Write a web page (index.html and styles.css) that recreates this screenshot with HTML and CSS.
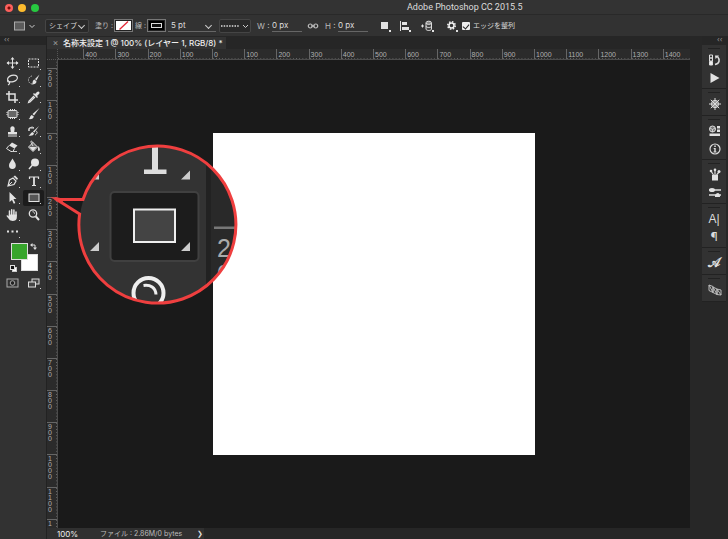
FILE: index.html
```html
<!DOCTYPE html>
<html lang="ja">
<head>
<meta charset="utf-8">
<title>Adobe Photoshop CC 2015.5</title>
<link rel="stylesheet" href="styles.css">
</head>
<body>
<div class="app">
  <header class="titlebar">
    <div class="lights">
      <button class="light close" aria-label="閉じる"></button>
      <button class="light minimize" aria-label="しまう"></button>
      <button class="light maximize" aria-label="拡大"></button>
    </div>
    <h1>Adobe Photoshop CC 2015.5</h1>
  </header>

  <form class="options">
    <button type="button" class="icon preset" aria-label="長方形ツール"><svg width="24" height="12" viewBox="0 0 24 12"><rect x="1.5" y="2" width="10" height="8" fill="#5c5c5c" stroke="#aaa"/><path d="M16.5 5l2.5 2.5L21.500 5" fill="none" stroke="#ccc"/></svg></button>
    <span class="select mode"><select aria-label="モード"><option>シェイプ</option></select></span>
    <span class="label">塗り :</span>
    <button type="button" class="paint" aria-label="塗り"><svg width="15" height="9" viewBox="0 0 15 9"><rect width="15" height="9" fill="#fff"/><path d="M3.500 8.500L12 .5" stroke="#e32636" stroke-width="1.300"/></svg></button>
    <span class="label">線 :</span>
    <button type="button" class="paint" aria-label="線"><svg width="15" height="9" viewBox="0 0 15 9"><rect width="15" height="9" fill="#000"/><rect x="2.500" y="2.500" width="10" height="4" fill="#111" stroke="#ddd"/></svg></button>
    <span class="select stroke-width"><select aria-label="線の幅"><option>5 pt</option></select></span>
    <button type="button" class="icon line-style" aria-label="線の種類"><svg width="30" height="12" viewBox="0 0 30 12"><path d="M1 6h18" stroke="#ddd" stroke-width="1.500" stroke-dasharray="1.500 1.200"/><path d="M23 5l2.500 2.500L28 5" fill="none" stroke="#ccc"/></svg></button>
    <label for="w">W :</label>
    <input id="w" class="size" type="text" value="0 px">
    <button type="button" class="icon" aria-label="縦横比を固定"><svg width="12" height="8" viewBox="0 0 12 8" fill="none" stroke="#bbb" stroke-width="1.200"><circle cx="3.300" cy="4" r="2"/><circle cx="8.700" cy="4" r="2"/><path d="M4 4h4"/></svg></button>
    <label for="h">H :</label>
    <input id="h" class="size" type="text" value="0 px">
    <button type="button" class="icon" aria-label="パスの操作"><svg width="14" height="16" viewBox="0 0 14 16"><path d="M1 4h7v7H1z"/><path d="M9 12h2v2H9z"/></svg></button>
    <button type="button" class="icon" aria-label="パスの整列"><svg width="14" height="16" viewBox="0 0 14 16"><path d="M0 3h1v10H0zM2 4h5v3H2zM2 9h7v3H2zM9 12h2v2H9z"/></svg></button>
    <button type="button" class="icon" aria-label="パスの配置"><svg width="14" height="16" viewBox="0 0 14 16"><path d="M0 8h3M1.500 6.500v3" stroke="#e4e4e4"/><g fill="#444" stroke="#ddd"><path d="M5 5v6c0 2 5.500 2 5.500 0V5"/><path d="M5 8c0 2 5.500 2 5.500 0" fill="none"/><ellipse cx="7.750" cy="4.800" rx="2.750" ry="1.600" fill="#888"/></g><path d="M11 12h2v2h-2z"/></svg></button>
    <button type="button" class="icon" aria-label="パスオプション"><svg width="14" height="16" viewBox="0 0 14 16" fill="none"><circle cx="5.500" cy="7.500" r="3.700" stroke="#eee" stroke-width="1.600" stroke-dasharray="1.500 1.400"/><circle cx="5.500" cy="7.500" r="2.500" stroke="#eee" stroke-width="1.500"/><path d="M10 12h2v2h-2z" fill="#ddd"/></svg></button>
    <input id="snap" class="check" type="checkbox" checked>
    <label for="snap" class="snap">エッジを整列</label>
  </form>

  <main class="workspace">
    <aside class="tools">
      <div class="dock-head">‹‹</div>
      <div class="tool-grid">
        <button aria-label="移動"><svg viewBox="0 0 18 16"><path d="M8.500 3v10M3 8h11" stroke="#e2e2e2"/><path d="M8.500 2L10.500 4.500h-4zM8.500 14L10.500 11.500h-4zM2.500 8L5 6v4zM14.500 8L12 6v4z"/></svg></button>
        <button aria-label="長方形選択"><svg viewBox="0 0 18 16"><rect x="3.500" y="4" width="10" height="8" fill="none" stroke="#e2e2e2" stroke-dasharray="2 1"/></svg></button>
        <button aria-label="なげなわ"><svg viewBox="0 0 18 16" fill="none" stroke="#e2e2e2" stroke-width="1.200"><ellipse cx="8.500" cy="6.500" rx="5" ry="3.200" transform="rotate(-15 8.500 6.500)"/><path d="M4 8c-1 1 0 2 1 2s1 2-1 3"/></svg></button>
        <button aria-label="クイック選択"><svg viewBox="0 0 18 16"><path d="M7 4a4 4 0 1 0 1 8" fill="none" stroke="#bbb" stroke-dasharray="1.500 1"/><path d="M14.500 2.500L10 7l1.500 1.500zM9.500 7.500l2 2c0 2-2 3-4.500 3 1-1 0-4 2.500-5z"/></svg></button>
        <button aria-label="切り抜き"><svg viewBox="0 0 18 16" fill="none" stroke="#e2e2e2" stroke-width="1.500"><path d="M5 2v9h9M2 5h9v9"/></svg></button>
        <button aria-label="スポイト"><svg viewBox="0 0 18 16"><path d="M9 7l-5 5-.5 1.500L5 13l5-5" fill="none" stroke="#e2e2e2" stroke-width="1.200"/><path d="M8 5l1-1 1 1 2-2c1.500-1.500 3.500.5 2 2l-2 2 1 1-1 1z"/></svg></button>
        <button aria-label="パッチ"><svg viewBox="0 0 18 16"><rect x="4" y="4.500" width="9" height="7" rx="1" fill="#666" stroke="#e2e2e2"/><path d="M3 6v4M14 6v4M6 3.500h5M6 12.500h5" stroke="#e2e2e2" stroke-dasharray="1 1"/></svg></button>
        <button aria-label="ブラシ"><svg viewBox="0 0 18 16"><path d="M14.500 2L7.500 8l1.500 1.500zM6.800 9l2 1.500c0 2-2.500 3-5.300 2.500 2-.5 1-3 3.300-4z"/></svg></button>
        <button aria-label="コピースタンプ"><svg viewBox="0 0 18 16"><path d="M6.500 7c-1.500-5 5.500-5 4 0l-.3 2H13v2.500H4V9h2.800zM4 12.500h9v1H4z"/></svg></button>
        <button aria-label="ヒストリーブラシ"><svg viewBox="0 0 18 16"><path d="M14 3L8 8.500l1.200 1.200zM7.500 9l1.500 1.500c-.5 2-2.500 2.500-5.500 2 2-.5 2-3 4-3.500z"/><path d="M4 5h5a3 3 0 0 0-5 3zM11 8c2 1 1 3-1 4" fill="none" stroke="#ddd"/></svg></button>
        <button aria-label="消しゴム"><svg viewBox="0 0 18 16"><path d="M8 3.500l5.500 3-3 3-5.500-3z"/><path d="M5 6.500l-2.500 3 4.500 3h2l1.500-3" fill="none" stroke="#e2e2e2"/><path d="M8 12.500h5" stroke="#ccc"/></svg></button>
        <button aria-label="塗りつぶし"><svg viewBox="0 0 18 16"><path d="M3.500 8L8 3.500l4.500 4.500L8 12.500z" fill="#666" stroke="#e2e2e2"/><path d="M4.500 8h7L8 12zM13.500 7c1.500 2 2 5 .5 5s-1-2-1-3z"/><path d="M8 7c-4-6-1-6 0-3" fill="none" stroke="#ddd"/></svg></button>
        <button aria-label="ぼかし"><svg viewBox="0 0 18 16"><path d="M8.500 2.500c2 3.500 3.300 4.500 3.300 7a3.400 3.400 0 0 1-6.800 0c0-2.500 1.500-3.500 3.500-7z"/></svg></button>
        <button aria-label="覆い焼き"><svg viewBox="0 0 18 16"><circle cx="10" cy="6.500" r="4"/><path d="M7.500 9L4 13" stroke="#e2e2e2" stroke-width="1.500"/></svg></button>
        <button aria-label="ペン"><svg viewBox="0 0 18 16"><path d="M4 13l1.500-6L9 5l3 3-2 3.500z" fill="none" stroke="#e2e2e2" stroke-width="1.200"/><path d="M4 13l4-4" stroke="#e2e2e2"/><path d="M9.500 3.500l1.500-1 3 3-1 1.500z"/></svg></button>
        <button aria-label="文字"><svg viewBox="0 0 18 16" fill="none" stroke="#e2e2e2"><path d="M4.500 6V4h9v2" stroke-width="1.200"/><path d="M9 4v8" stroke-width="1.800"/><path d="M7 12.500h4"/></svg></button>
        <button aria-label="パス選択"><svg viewBox="0 0 18 16"><path d="M5.500 2l7 7H9.500l1.800 4-1.500.8L8 10l-2.500 2z"/></svg></button>
        <button class="active" aria-label="長方形"><svg viewBox="0 0 18 16"><rect x="4" y="4" width="10" height="7.500" fill="#555" stroke="#e2e2e2"/></svg></button>
        <button aria-label="手のひら"><svg viewBox="0 0 18 16"><path d="M5.500 9V4M7.700 8V2.800M9.900 8V3M12 9V5" stroke="#e2e2e2" stroke-width="1.500" stroke-linecap="round"/><path d="M4.800 7.500h8V11c0 3-5.500 4-7.500 1.500L2.500 9c0-1.500 1.500-.8 2.300.5z"/></svg></button>
        <button class="plain" aria-label="ズーム"><svg viewBox="0 0 18 16" fill="none" stroke="#e2e2e2"><circle cx="8" cy="6.500" r="3.700" stroke-width="1.300"/><path d="M7.500 4.700c1.500 0 2 1 2 2"/><path d="M10.800 9.500L14 13" stroke-width="2"/></svg></button>
        <button aria-label="その他"><svg viewBox="0 0 18 16"><path d="M3 6.500h2v2H3zM7.500 6.500h2v2h-2zM12 6.500h2v2h-2z"/></svg></button>
      </div>
      <div class="swatches">
        <button class="swatch back" aria-label="背景色"></button>
        <button class="swatch fore" aria-label="描画色"></button>
        <button class="mini swap" aria-label="入れ替え"><svg width="7" height="7" viewBox="0 0 7 7"><path d="M2 2h3v3" fill="none" stroke="#ddd"/><path d="M0 2l2.500-2v4zM5 7L3 4.500h4z" fill="#ddd"/></svg></button>
        <button class="mini reset" aria-label="初期設定"><svg width="7" height="7" viewBox="0 0 7 7"><rect x="2.500" y="2.500" width="4" height="4" fill="#fff" stroke="#ccc"/><rect x=".5" y=".5" width="4" height="4" fill="#111" stroke="#ddd"/></svg></button>
      </div>
      <div class="screen-modes">
        <button class="plain" aria-label="クイックマスク"><svg viewBox="0 0 18 16"><rect x="3" y="4" width="11" height="8" fill="none" stroke="#aaa"/><circle cx="8.500" cy="8" r="2.300" fill="#222" stroke="#aaa"/></svg></button>
        <button aria-label="スクリーンモード"><svg viewBox="0 0 18 16" fill="#444" stroke="#ddd"><rect x="7" y="4" width="7" height="5"/><rect x="3.500" y="7" width="7" height="5"/></svg></button>
      </div>
    </aside>

    <section class="document">
      <div class="tab"><button class="tab-close" aria-label="閉じる">×</button><span>名称未設定 1 @ 100% (レイヤー 1, RGB/8) *</span></div>
      <div class="stage">
        <div class="corner"></div>
        <div class="ruler top"><div class="marks">
          <span></span><span>400</span><span>300</span><span>200</span><span>100</span><span>0</span><span>100</span><span>200</span><span>300</span><span>400</span><span>500</span><span>600</span><span>700</span><span>800</span><span>900</span><span>1000</span><span>1100</span><span>1200</span><span>1300</span><span>1400</span>
        </div></div>
        <div class="ruler side"><div class="marks">
          <span></span><span>200</span><span>100</span><span>0</span><span>100</span><span>200</span><span>300</span><span>400</span><span>500</span><span>600</span><span>700</span><span>800</span><span>900</span><span>1000</span><span>1100</span><span>1</span>
        </div></div>
        <div class="canvas"><div class="artboard"></div></div>
      </div>
      <footer class="status"><span class="zoom">100%</span><span class="file">ファイル : 2.86M/0 bytes</span><button aria-label="詳細">❯</button></footer>
    </section>

    <aside class="panels">
      <div class="dock-head right">‹‹</div>
      <div class="group">
        <button aria-label="ヒストリー"><svg viewBox="0 0 18 18" fill="none" stroke="#ddd"><path d="M4.500 4h3v3h-3zM4.500 7h3v3h-3z"/><path d="M4.500 10.500h3V14h-3z" fill="#eee"/><path d="M10 13.500c5-1 5-5 2.500-8" stroke-width="1.500"/><path d="M10 4.500h4L10.500 8z" fill="#ddd" stroke="none"/></svg></button>
        <button aria-label="アクション"><svg viewBox="0 0 18 18"><path d="M5.500 4L14.500 9l-9 5z"/></svg></button>
      </div>
      <div class="group single">
        <button aria-label="ナビゲーター"><svg viewBox="0 0 18 18" fill="none" stroke="#ddd"><circle cx="10" cy="9" r="3.300" stroke-width="1.200"/><path d="M10 3v12M4 9h12M5.800 4.800l8.400 8.400M14.200 4.800l-8.400 8.400"/><circle cx="10" cy="9" r="1" fill="#ddd"/></svg></button>
      </div>
      <div class="group">
        <button aria-label="ライブラリ"><svg viewBox="0 0 18 18"><circle cx="7.500" cy="7" r="3" fill="#777" stroke="#ddd"/><path d="M5 6l2.500 1.500L10 6M7.500 7.500V10" fill="none" stroke="#eee" stroke-width=".7"/><path d="M12 4h3v2.500h-3zM12 7.500h3V10h-3zM4.500 11.500h10.500V14H4.500z"/></svg></button>
        <button aria-label="情報"><svg viewBox="0 0 18 18"><circle cx="10" cy="9" r="5" fill="none" stroke="#ddd" stroke-width="1.200"/><path d="M9.300 5.500h1.500V7H9.300zM8.700 8h2v3.500h.8v1h-3v-1h.8V9h-.6z"/></svg></button>
      </div>
      <div class="group">
        <button aria-label="ブラシプリセット"><svg viewBox="0 0 18 18"><path d="M7 9h6v5.500H7z"/><path d="M8.500 9L6 5M10 9V4M11.500 9L14 6" stroke="#ddd" stroke-width="1.200"/><circle cx="6" cy="5" r="1.300"/><circle cx="10" cy="3.800" r="1.300"/><circle cx="14" cy="5.500" r="1.500"/></svg></button>
        <button aria-label="ブラシ設定"><svg viewBox="0 0 18 18"><path d="M4 6h12M4 11h12" stroke="#ddd" stroke-width="1.500"/><ellipse cx="7" cy="6" rx="3" ry="2"/><path d="M10 11c2-3 5-3 5 2h-5z"/></svg></button>
      </div>
      <div class="group">
        <button class="glyph sans" aria-label="文字">A|</button>
        <button class="glyph" aria-label="段落">¶</button>
      </div>
      <div class="group single"><button class="glyph script" aria-label="字形">𝒜</button></div>
      <div class="group single">
        <button aria-label="レイヤーカンプ"><svg viewBox="0 0 18 18" fill="none" stroke="#bbb"><path d="M4 4l4 1.500v6L4 9.500zM8 6l4 2v5.500L8 11.500zM12 8l4 1v5l-4-.5zM4 4l4 7.500M8 6l4 7.500M12 8l4 6"/></svg></button>
      </div>
    </aside>
  </main>

  <svg class="callout" width="190" height="168" viewBox="50 140 190 168" role="img" aria-label="長方形ツールの拡大">
    <defs><clipPath id="lens"><circle cx="157.500" cy="224.200" r="78"/></clipPath></defs>
    <path d="M85 199.500H60L54 198l28 18z" fill="#1a1a1a"/>
    <g clip-path="url(#lens)">
      <rect x="77" y="144" width="162" height="162" fill="#333"/>
      <rect x="210" y="144" width="30" height="162" fill="#292929"/>
      <rect x="206" y="144" width="5" height="162" fill="#222"/>
      <rect x="110.500" y="192" width="88" height="69" rx="4" fill="#1c1c1c" stroke="#404040" stroke-width="2"/>
      <rect x="134" y="209.500" width="41" height="32.500" fill="#444" stroke="#eee" stroke-width="2"/>
      <path d="M152 140h6v29.500h8.500v4.500h-22.500v-4.500h8z" fill="#ddd"/>
      <g fill="#ccc"><path d="M190 170.500v9h-9zM99 170.500v9h-9zM99 242v9h-9zM190 242v9h-9z"/></g>
      <circle cx="148.500" cy="293" r="15" fill="#333" stroke="#eee" stroke-width="4"/>
      <path d="M143.500 285.500c7-1 12 2 12.500 9" fill="none" stroke="#eee" stroke-width="3"/>
      <rect x="214" y="226.500" width="26" height="2.500" fill="#777"/>
      <text x="217" y="257" class="lens-digit">2</text>
      <text x="217" y="283" class="lens-digit">0</text>
    </g>
    <path d="M83 199.500A78.500 78.500 0 1 1 79.600 214L55 198.500L60 199.500z" fill="none" stroke="#ef3f3f" stroke-width="3"/>
    <path d="M50 197l14 1.500-2 5z" fill="#ef3f3f"/>
  </svg>
</div>
</body>
</html>
```
FILE: styles.css
```css
* { box-sizing: border-box; }

body {
  margin: 0;
  background: #1a1a1a;
  color: #ddd;
  fill: #e2e2e2;
  font: 8px/10px Inter, "Noto Sans CJK JP", sans-serif;
}

button, input, select {
  margin: 0;
  padding: 0;
  border: 0;
  background: none;
  color: inherit;
  font: inherit;
}

svg { display: block; }

.app {
  position: relative;
  display: flex;
  flex-direction: column;
  height: 100vh;
  overflow: hidden;
}

.titlebar {
  display: flex;
  align-items: center;
  height: 15px;
  background: #333;
  border-bottom: 1px solid #292929;
}

.titlebar h1 {
  margin: 0 0 0 auto;
  width: 321px;
  font-family: Roboto, sans-serif;
  font-size: 9px;
  font-weight: 400;
  line-height: 16px;
  white-space: nowrap;
}

.lights { display: flex; gap: 5px; padding: 2px 0 0 5px; }
.light { width: 8px; height: 8px; border-radius: 50%; }
.close { background: radial-gradient(circle, #7a0c08 1px, #fc605c 2px); }
.minimize { background: #fdbc2e; }
.maximize { background: #27c840; }

.options {
  display: grid;
  grid-template-columns: 32px 50px 19px 21px 12px 21px 51px 38px 15px 35px 18px 13px 42px 20px 21px 25px 16px 11px 1fr;
  align-items: center;
  justify-items: start;
  height: 21px;
  padding-left: 13px;
  background: #323232;
  color: #bbb;
  white-space: nowrap;
}

.label { font-size: 7px; }

.select { position: relative; display: block; }
.select select { appearance: none; width: 100%; height: 100%; color: #ddd; }
.select::after {
  content: "";
  position: absolute;
  right: 5px;
  top: 4px;
  width: 4px;
  height: 4px;
  border: solid #ccc;
  border-width: 0 1px 1px 0;
  transform: rotate(45deg);
}

.mode { width: 44px; height: 14px; background: #292929; border: 1px solid #454545; border-radius: 2px; }
.mode select { padding-left: 3px; font-size: 7px; }
.mode::after { right: 4px; top: 3px; }
.stroke-width { width: 48px; height: 13px; border-bottom: 1px solid #666; }
.stroke-width select { padding-left: 3px; }
.line-style { height: 14px; background: #292929; border: 1px solid #454545; border-radius: 2px; }
.paint { padding: 1px; border: 1px solid #777; background: #222; }
.size { width: 30px; height: 13px; border-bottom: 1px solid #666; color: #ddd; }

.check {
  appearance: none;
  display: grid;
  place-items: center;
  width: 8px;
  height: 8px;
  border-radius: 1px;
  background: #eee;
}

.check::after {
  content: "";
  width: 3px;
  height: 5px;
  border: solid #222;
  border-width: 0 1px 1px 0;
  transform: rotate(40deg);
}

.snap { color: #ddd; font-size: 7px; }

.workspace {
  flex: 1;
  min-height: 0;
  display: grid;
  grid-template-columns: 47px 1fr 38px;
  background: #282828;
}

.dock-head { height: 9px; padding-left: 4px; background: #262626; color: #999; font-size: 7px; line-height: 8px; }
.dock-head.right { width: 26px; padding-left: 15px; }

.tools { background: #323232; border-right: 1px solid #222; }

.tool-grid {
  display: grid;
  grid-template-columns: 21px 21px;
  grid-template-rows: repeat(11, 1fr);
  height: 185px;
  margin: 10px 0 0 2px;
}

.tool-grid button, .screen-modes button { position: relative; display: grid; place-items: center; }
.tool-grid svg, .screen-modes svg { width: 18px; height: 16px; }
.tool-grid .active { background: #1c1c1c; border-radius: 2px; }

.tool-grid button:not(.plain)::after, .screen-modes button:not(.plain)::after {
  content: "";
  position: absolute;
  right: 3px;
  bottom: 2px;
  width: 1px;
  height: 1px;
  background: #ccc;
}

.swatches { position: relative; width: 27px; height: 29px; margin: 3px 0 0 10px; }
.swatch { position: absolute; width: 17px; height: 17px; border: 1px solid #ddd; }
.fore { left: 1px; top: 0; background: #37a52c; }
.back { left: 11px; top: 11px; background: #fff; }
.mini { position: absolute; }
.swap { right: 0; top: 0; }
.reset { left: 0; bottom: 0; }

.screen-modes { display: grid; grid-template-columns: 21px 21px; margin: 3px 0 0 2px; }

.document { display: flex; flex-direction: column; min-width: 0; min-height: 0; }

.tab {
  display: flex;
  align-items: center;
  gap: 4px;
  height: 13px;
  padding-left: 5px;
  background: linear-gradient(#333, #333) 0 1px / 179px 100% no-repeat #262626;
  margin-right: -12px;
  color: #eee;
  font-weight: 500;
  white-space: nowrap;
}

.tab-close { width: 7px; color: #999; font-weight: 400; font-size: 9px; }

.stage {
  flex: 1;
  min-height: 0;
  display: grid;
  grid-template: 11px minmax(0, 1fr) / 11px minmax(0, 1fr);
}

.corner { background: #2b2b2b; border: dotted #555; border-width: 0 1px 1px 0; }
.ruler { overflow: hidden; background: #2b2b2b; color: #b0b0b0; font-family: "Liberation Sans", sans-serif; font-size: 7px; }
.marks { display: grid; }

.ruler.top { border-bottom: 1px solid #4c4c4c; }
.top .marks { grid-template-columns: repeat(20, 1fr); height: 10px; margin: 0 -5px 0 -7px; }
.top span {
  padding: 1px 0 0 1px;
  border-left: 1px solid #666;
  background: linear-gradient(90deg, #666 1px, transparent 1px) 0 100% / 10% 2px repeat-x;
  line-height: 10px;
}

.ruler.side { display: grid; border-right: 1px solid #4c4c4c; }
.side .marks { grid-template-rows: repeat(16, minmax(0, 1fr)); margin: -24px 0 -23px; }
.side span {
  padding: 1px 6px 0 1px;
  border-top: 1px solid #666;
  background: linear-gradient(#666 1px, transparent 1px) 100% 0 / 2px 10% repeat-y;
  line-height: 6px;
  word-break: break-all;
}

.canvas { display: grid; place-items: center; background: #1a1a1a; min-height: 0; }
.artboard { width: 51%; aspect-ratio: 1; background: #fff; }

.status { display: flex; align-items: center; height: 11px; padding-left: 10px; background: linear-gradient(#303030, #303030) 0 0 / 157px 100% no-repeat #262626; }
.zoom { width: 43px; color: #eee; }
.file { width: 97px; color: #bbb; font-size: 7px; }
.status button { font-size: 7px; }

.panels { padding-left: 12px; background: #272727; border-right: 2px solid #272727; }
.group { display: grid; grid-auto-rows: 18px; padding: 6px 0 1px; background: radial-gradient(#222, #222) 50% 3px / 12px 1px no-repeat #323232; border-bottom: 1px solid #222; }
.single { padding-bottom: 2px; }
.group button { display: grid; place-items: center; }
.group svg { width: 18px; height: 18px; }
.glyph { font-size: 12px; line-height: 14px; }
.sans { font-family: "Liberation Sans", sans-serif; }
.script { font-family: "DejaVu Serif", "DejaVu Sans", serif; font-size: 13px; font-weight: 700; }

.callout { position: absolute; left: 50px; top: 140px; }
.lens-digit { font: 25px "Liberation Sans", sans-serif; fill: #aaa; }
```
